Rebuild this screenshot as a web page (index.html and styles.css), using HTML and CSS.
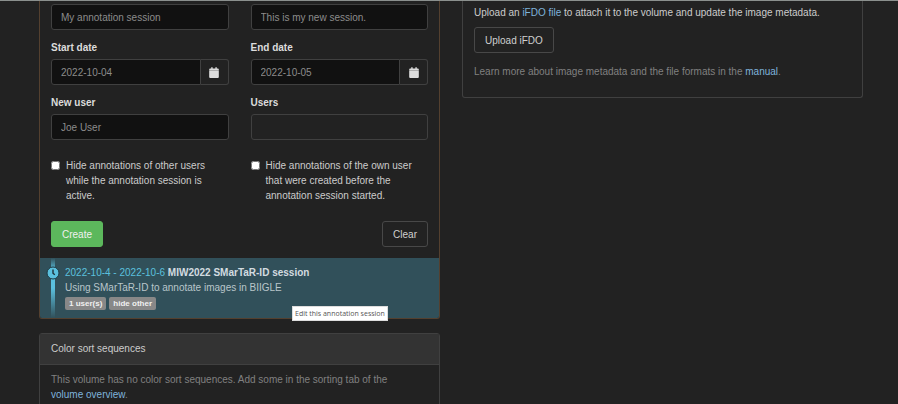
FILE: index.html
```html
<!DOCTYPE html>
<html lang="en">
<head>
<meta charset="utf-8">
<title>Edit volume</title>
<link rel="stylesheet" href="styles.css">
</head>
<body>
<main class="page">
  <div class="column">
    <section class="panel panel-warning">
      <form class="session-form">
        <div class="fields">
          <div class="field"><input class="control" type="text" aria-label="Name" placeholder="My annotation session"></div>
          <div class="field"><input class="control" type="text" aria-label="Description" placeholder="This is my new session."></div>
          <div class="field">
            <label for="start">Start date</label>
            <div class="input-group">
              <input class="control" id="start" type="text" placeholder="2022-10-04">
              <button class="addon" type="button" aria-label="Pick start date"><svg class="calendar" viewBox="0 0 448 512"><path d="M128 0a32 32 0 0 1 32 32v32h128V32a32 32 0 0 1 64 0v32h48a48 48 0 0 1 48 48v48H0v-48a48 48 0 0 1 48-48h48V32a32 32 0 0 1 32-32zM0 176h448v288a48 48 0 0 1-48 48H48a48 48 0 0 1-48-48z"/></svg></button>
            </div>
          </div>
          <div class="field">
            <label for="end">End date</label>
            <div class="input-group">
              <input class="control" id="end" type="text" placeholder="2022-10-05">
              <button class="addon" type="button" aria-label="Pick end date"><svg class="calendar" viewBox="0 0 448 512"><path d="M128 0a32 32 0 0 1 32 32v32h128V32a32 32 0 0 1 64 0v32h48a48 48 0 0 1 48 48v48H0v-48a48 48 0 0 1 48-48h48V32a32 32 0 0 1 32-32zM0 176h448v288a48 48 0 0 1-48 48H48a48 48 0 0 1-48-48z"/></svg></button>
            </div>
          </div>
          <div class="field">
            <label for="new-user">New user</label>
            <input class="control" id="new-user" type="text" placeholder="Joe User">
          </div>
          <div class="field">
            <label for="users">Users</label>
            <input class="control control-plain" id="users" type="text" readonly>
          </div>
        </div>
        <div class="options">
          <label class="option"><input type="checkbox"><span>Hide annotations of other users while the annotation session is active.</span></label>
          <label class="option"><input type="checkbox"><span>Hide annotations of the own user that were created before the annotation session started.</span></label>
        </div>
        <div class="actions">
          <button class="btn btn-success" type="button">Create</button>
          <button class="btn" type="button">Clear</button>
        </div>
      </form>
      <ul class="sessions">
        <li class="session">
          <div class="timeline">
            <svg class="clock" viewBox="0 0 14 14"><circle cx="7" cy="7" r="6" fill="#5bc0de" stroke="#1d3a44"/><path d="M7 3.500v3.700l1.800 1.500" fill="none" stroke="#1d3038" stroke-width="1.400"/></svg>
          </div>
          <div class="session-body">
            <div><span class="dates">2022-10-4 - 2022-10-6</span> <strong>MIW2022 SMarTaR-ID session</strong></div>
            <div>Using SMarTaR-ID to annotate images in BIIGLE</div>
            <div class="badges"><span class="badge">1 user(s)</span><span class="badge">hide other</span></div>
          </div>
          <div class="tooltip" role="tooltip">Edit this annotation session</div>
        </li>
      </ul>
    </section>
    <section class="panel">
      <h2 class="panel-heading">Color sort sequences</h2>
      <p class="panel-text muted">This volume has no color sort sequences. Add some in the sorting tab of the <a href="#">volume overview</a>.</p>
    </section>
  </div>
  <div class="column">
    <section class="panel metadata">
      <p>Upload an <a href="#">iFDO file</a> to attach it to the volume and update the image metadata.</p>
      <button class="btn" type="button">Upload iFDO</button>
      <p class="muted">Learn more about image metadata and the file formats in the <a href="#">manual</a>.</p>
    </section>
  </div>
</main>
</body>
</html>
```
FILE: styles.css
```css
* { box-sizing: border-box; }
body {
  margin: 0;
  height: 100vh;
  overflow: hidden;
  border-top: 1px solid #8b908e;
  background: #222;
  color: #ccc;
  font: 10px/15px "Liberation Sans", Arial, sans-serif;
}
a { color: #7fb3dc; text-decoration: none; }
p, h2, ul { margin: 0; padding: 0; }
.page {
  display: grid;
  grid-template-columns: 1fr 1fr;
  gap: 22px;
  align-items: start;
  padding: 0 35px 0 39px;
}
.column { display: grid; gap: 14px; }
.panel { border: 1px solid #404040; border-radius: 3px; }
.column > .panel:first-child { border-top: 0; border-top-left-radius: 0; border-top-right-radius: 0; }
.panel.panel-warning { border-color: #54402f; }
.session-form { padding: 3px 11px 11px; }
.fields, .options { display: grid; grid-template-columns: 1fr 1fr; column-gap: 22px; }
.fields { row-gap: 10px; }
.field label { display: block; margin-bottom: 4px; font-weight: bold; color: #dcdcdc; }
.control {
  display: block;
  width: 100%;
  min-width: 0;
  height: 26px;
  padding: 0 9px;
  border: 1px solid #404040;
  border-radius: 3px;
  background: #111;
  color: #ccc;
  font: inherit;
}
.control::placeholder { color: #8c8c8c; opacity: 1; }
.control-plain { background: #222; }
.input-group { display: flex; }
.input-group .control { flex: 1; border-radius: 3px 0 0 3px; }
.addon {
  display: flex;
  align-items: center;
  justify-content: center;
  width: 28px;
  padding: 0;
  border: 1px solid #404040;
  border-left: 0;
  border-radius: 0 3px 3px 0;
  background: #222;
}
.calendar { width: 10px; height: 11px; fill: #ddd; }
.options { padding-top: 18px; }
.option { display: flex; align-items: flex-start; gap: 6px; padding-right: 4px; }
.option input { flex: none; width: 9px; height: 9px; margin: 3px 0 0; }
.actions { display: flex; justify-content: space-between; padding-top: 18px; }
.btn {
  height: 26px;
  padding: 0 10px;
  border: 1px solid #484848;
  border-radius: 3px;
  background: #222;
  color: #d0d0d0;
  font: inherit;
}
.btn-success { border-color: #5cb85c; background: #5cb85c; color: #f0f0f0; }
.sessions { list-style: none; }
.session {
  position: relative;
  display: flex;
  gap: 5px;
  padding-left: 6px;
  border-radius: 0 0 2px 2px;
  background: #31505a;
}
.timeline {
  width: 14px;
  padding-top: 8px;
  background: linear-gradient(#5bc0de00, #5bc0de 20%, #5bc0de 50%, #5bc0de00) center / 4px 100% no-repeat;
}
.clock { display: block; width: 14px; height: 14px; }
.session-body { padding: 7px 0 8px; color: #b9c6ca; }
.session-body strong { color: #d3dce0; }
.session-body .dates { color: #5bc0de; }
.badges { display: flex; gap: 3px; padding-top: 2px; }
.badge {
  padding: 0 4px;
  border-radius: 2px;
  background: #888;
  color: #f0f0f0;
  font-size: 8px;
  line-height: 13px;
  font-weight: bold;
}
.tooltip {
  position: absolute;
  top: 48px;
  left: 252px;
  padding: 0 2px;
  border: 1px solid #ddd;
  background: #fff;
  color: #555;
  font: 7px/13px "Open Sans", sans-serif;
  white-space: nowrap;
}
.panel-heading {
  padding: 7px 11px 8px;
  border-bottom: 1px solid #404040;
  background: #333;
  font: inherit;
}
.panel-text { padding: 7px 22px 11px 11px; }
.muted { color: #808080; }
.metadata { padding: 4px 11px 18px; }
.metadata .btn { margin: 7px 0 11px; }
```
